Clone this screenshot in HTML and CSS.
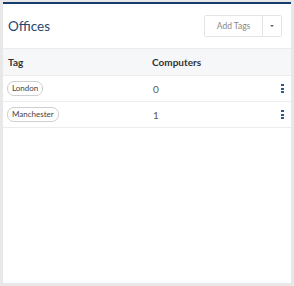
FILE: index.html
```html
<!DOCTYPE html>
<html>
<head>
  <meta charset="UTF-8">
  <title>Offices</title>
  <link rel="stylesheet" href="styles.css">
</head>
<body>
  <div class="card">
    <div class="card-head">
      <h2>Offices</h2>
      <div class="split-btn">
        <button class="btn-main">Add Tags</button>
        <button class="btn-caret"><span class="caret"></span></button>
      </div>
    </div>
    <table class="tags">
      <thead>
        <tr><th class="col-tag">Tag</th><th>Computers</th><th></th></tr>
      </thead>
      <tbody>
        <tr>
          <td class="tag-cell"><span class="pill">London</span></td>
          <td class="num">0</td>
          <td class="more"><span class="dots"><i></i><i></i><i></i></span></td>
        </tr>
        <tr>
          <td class="tag-cell"><span class="pill">Manchester</span></td>
          <td class="num">1</td>
          <td class="more"><span class="dots"><i></i><i></i><i></i></span></td>
        </tr>
      </tbody>
    </table>
  </div>
</body>
</html>
```
FILE: styles.css
```css
body {
  margin: 0;
  background: #e8e8e8;
  font-family: Lato, 'Liberation Sans', sans-serif;
  color: #333;
  padding: 2px 3px 3px 3px;
  height: 286px;
  box-sizing: border-box;
}

.card {
  background: #fff;
  border-top: 2px solid #173b6c;
  height: 281px;
  box-sizing: border-box;
}

.card-head {
  display: flex;
  align-items: center;
  justify-content: space-between;
  height: 44px;
  padding: 0 9px 0 5px;
}

.card-head h2 {
  margin: 0;
  font-size: 13.5px;
  font-weight: 400;
  color: #26466d;
}

.split-btn {
  display: flex;
  border: 1px solid #e4e4e4;
  border-radius: 2px;
}

.split-btn button {
  background: #fff;
  border: none;
  font-family: inherit;
  cursor: pointer;
  height: 20px;
}

.btn-main {
  width: 58px;
  padding: 0;
  font-size: 8.5px;
  color: #888;
  border-right: 1px solid #e4e4e4 !important;
}

.btn-caret {
  width: 18px;
  padding: 0;
  display: flex;
  align-items: center;
  justify-content: center;
}

.caret {
  border-left: 2.5px solid transparent;
  border-right: 2.5px solid transparent;
  border-top: 2.5px solid #666;
}

.tags {
  width: 100%;
  border-collapse: collapse;
  font-size: 10px;
}

.tags th {
  text-align: left;
  font-weight: 700;
  color: #333;
  background: #f6f7f9;
  border-top: 1px solid #ececec;
  border-bottom: 1px solid #ececec;
  height: 26px;
  padding: 0 0 0 5px;
}

.tags th.col-tag {
  width: 139px;
}

.tags td {
  border-bottom: 1px solid #ececec;
  height: 25px;
  padding: 0 0 0 6px;
}

.tags td.tag-cell {
  padding-left: 4px;
}

.pill {
  display: inline-block;
  border: 1px solid #cfcfcf;
  border-radius: 7px;
  padding: 1px 4px;
  font-size: 8px;
  line-height: 11px;
  color: #444;
}

.num {
  color: #595959;
}

.more {
  width: 10px;
  padding: 0 !important;
}

.dots {
  display: flex;
  flex-direction: column;
  gap: 1.5px;
  width: 3px;
}

.dots i {
  width: 3px;
  height: 2px;
  background: #2c5a8a;
}
```
